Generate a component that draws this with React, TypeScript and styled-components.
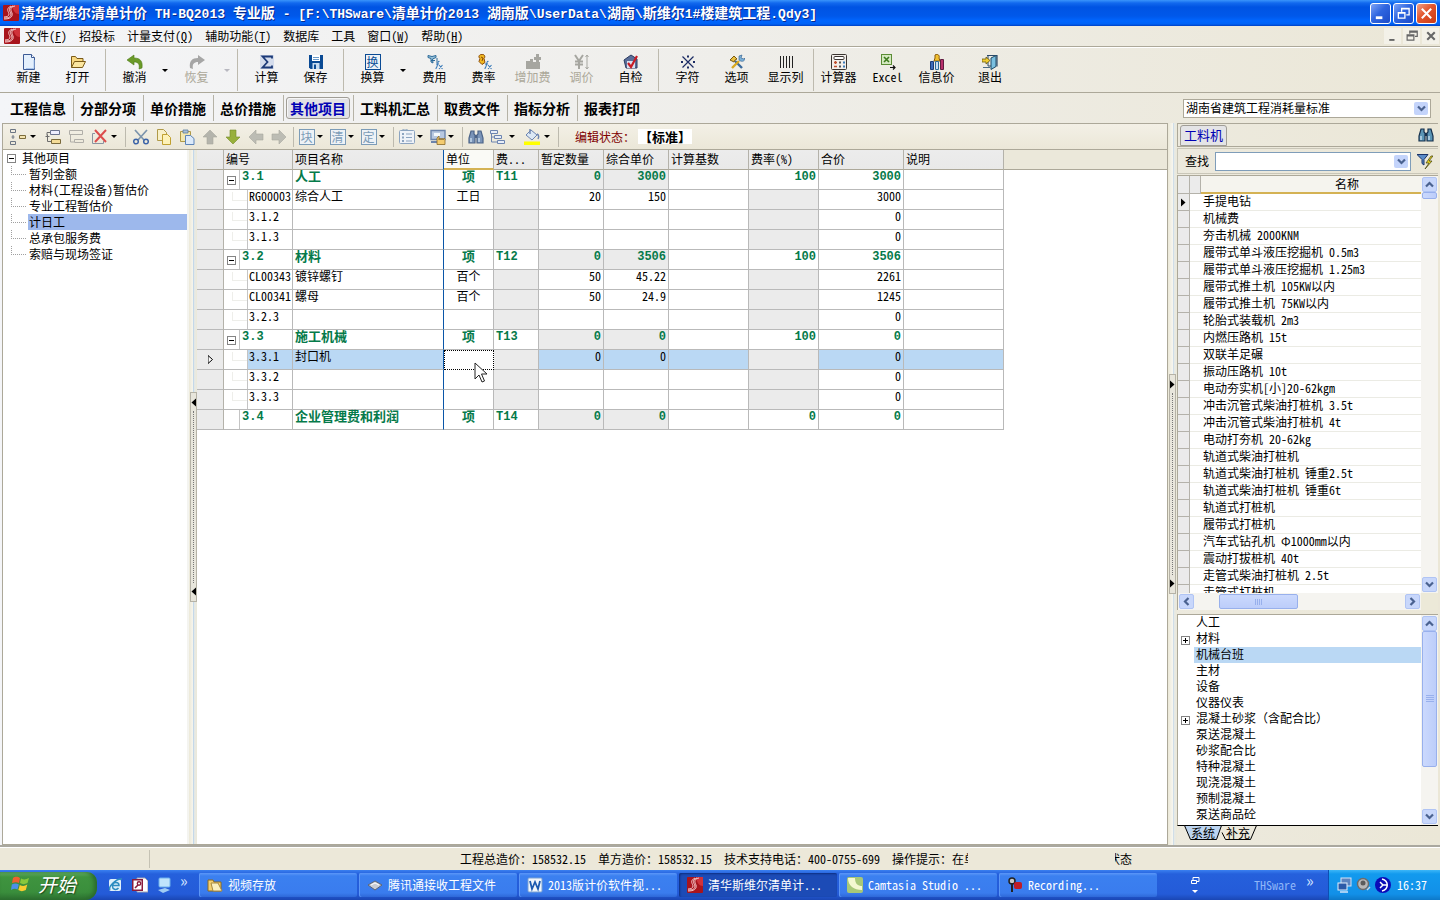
import React from 'react';
import styled, { createGlobalStyle, css } from 'styled-components';

const CJK = '"Noto Sans Mono CJK SC", "Noto Sans CJK SC", sans-serif';
const MONO = '"Liberation Mono", "Noto Sans CJK SC", monospace';

const GlobalStyle = createGlobalStyle`
  * { box-sizing: border-box; }
  body { margin: 0; font: 12px/16px ${CJK}; color: #000; background: #ece9d8; }
  button, input, select { font: inherit; color: inherit; margin: 0; padding: 0; border: 0; background: none; border-radius: 0; }
  button { white-space: nowrap; }
  ul { list-style: none; margin: 0; padding: 0; }
  svg { display: block; flex: none; }
`;

/* ---------- shell ---------- */
const Shell = styled.div`
  display: flex;
  flex-direction: column;
  height: 100vh;
  overflow: hidden;
  background: linear-gradient(90deg, #f4f5f8 0%, #efeeea 50%, #ebe7d7 100%);
`;

const TitleBar = styled.header`
  display: flex;
  align-items: center;
  gap: 2px;
  height: 26px;
  padding: 0 3px;
  flex: none;
  background: linear-gradient(180deg, #3a95fb 0, #1269ee 3px, #0054e3 7px, #0058ea 16px, #0066ff 21px, #0062f5 24px, #0040c4 26px);
`;

const Title = styled.h1`
  flex: 1;
  margin: 0;
  overflow: hidden;
  white-space: pre;
  font: bold 14px/24px ${CJK};
  color: #fff;
  text-shadow: 1px 1px 0 #0a2a8c;
`;

const TitleLatin = styled.span`
  font: bold 13px/24px ${MONO};
`;

const WindowButton = styled.button<{ $close?: boolean }>`
  display: grid;
  place-items: center;
  width: 21px;
  height: 21px;
  border: 1px solid #fff;
  border-radius: 3px;
  background: ${p => (p.$close ? 'linear-gradient(135deg,#f0a088,#e2552c 45%,#c93a14)' : 'linear-gradient(135deg,#7ea4f6,#2f66e0 45%,#1c4bc8)')};
`;

const MenuBar = styled.nav`
  display: flex;
  align-items: center;
  gap: 12px;
  height: 21px;
  padding: 0 1px 0 4px;
  flex: none;
  border-bottom: 1px solid #aca899;
`;

const MenuItem = styled.button`
  line-height: 18px;
  &:first-of-type { margin-left: -7px; }
`;

const MdiButtons = styled.div`
  display: flex;
  gap: 2px;
  margin-left: auto;
`;

const MdiButton = styled.button`
  display: grid;
  place-items: center;
  width: 17px;
  height: 16px;
  background: #f3f1e8;
`;

/* ---------- main toolbar ---------- */
const Toolbar = styled.div`
  display: flex;
  align-items: center;
  height: 46px;
  padding-left: 4px;
  flex: none;
  border-top: 1px solid #fff;
  border-bottom: 1px solid #aca899;
`;

const ToolButton = styled.button<{ $w?: number }>`
  display: flex;
  flex-direction: column;
  align-items: center;
  align-self: flex-start;
  width: ${p => p.$w ?? 49}px;
  line-height: 14px;
  margin-top: 6px;
  &:disabled { color: #aca899; }
`;

const DropArrow = styled.button<{ $dim?: boolean; $w?: number }>`
  width: ${p => p.$w ?? 12}px;
  height: 20px;
  display: flex;
  align-items: center;
  &::after {
    content: '';
    border: 3px solid transparent;
    border-top-color: ${p => (p.$dim ? '#b8b8c0' : '#000')};
    border-bottom: 0;
    margin-left: ${p => (p.$w ? 3 : 1)}px;
  }
`;

const Divider = styled.i<{ $w?: number; $h?: number }>`
  width: ${p => p.$w ?? 8}px;
  height: ${p => p.$h ?? 42}px;
  flex: none;
  &::before {
    content: '';
    display: block;
    height: 100%;
    margin-left: 3px;
    border-left: 1px solid #bdbaae;
  }
`;

/* ---------- page tabs ---------- */
const TabRow = styled.div`
  display: flex;
  align-items: center;
  height: 30px;
  padding: 0 9px 0 4px;
  flex: none;
`;

const PageTab = styled.button<{ $active?: boolean }>`
  display: flex;
  align-items: center;
  height: 26px;
  padding: 0 3px 0 2px;
  border-right: 1px solid #b5b2a6;
  font: bold 14px/18px ${CJK};
  &:last-of-type { border-right: 0; }
  span {
    padding: 1px 3px 1px;
    border: 1px solid transparent;
    border-radius: 3px;
    ${p => p.$active && css`
      color: #0000b4;
      border-color: #a09d96;
      background: #e2e2e4;
      box-shadow: inset 1px 1px 0 #f6f6f6;
    `}
  }
`;

const Combo = styled.div<{ $w?: number; $blue?: boolean }>`
  display: flex;
  align-items: center;
  height: 19px;
  padding: 0 2px;
  background: #fff;
  border: 1px solid ${p => (p.$blue ? '#7f9db9' : '#aca899')};
  ${p => (p.$w ? `width: ${p.$w}px; margin-left: auto; flex: none;` : 'flex: 1; min-width: 0;')}
  select, input { flex: 1; min-width: 0; width: 100%; height: 16px; appearance: none; outline: 0; }
`;

const ComboArrow = styled.span`
  display: grid;
  place-items: center;
  width: 14px;
  height: 13px;
  border-radius: 2px;
  background: #c4d4fb;
`;

/* ---------- workspace ---------- */
const Workspace = styled.main`
  display: flex;
  flex: 1;
  min-height: 0;
  border-bottom: 2px solid #aaa89f;
`;

const Editor = styled.section`
  display: flex;
  flex-direction: column;
  flex: 1;
  min-width: 0;
  margin-left: 2px;
  border: 1px solid #aca899;
`;

const EditBar = styled.div`
  display: flex;
  align-items: center;
  height: 26px;
  padding-left: 3px;
  flex: none;
  background: linear-gradient(180deg, #f3f0e6, #ebe7d8);
  border-bottom: 1px solid #aca899;
`;

const EditButton = styled.button<{ $narrow?: boolean }>`
  display: grid;
  place-items: center;
  width: ${p => (p.$narrow ? 19 : 23)}px;
  height: 22px;
`;

const BoxedChar = styled.span<{ $strong?: boolean }>`
  display: grid;
  place-items: center;
  width: 16px;
  height: 16px;
  font-size: 12px;
  line-height: 12px;
  color: ${p => (p.$strong ? '#0a5098' : '#7c9cb8')};
  border: 1px solid ${p => (p.$strong ? '#0a4a94' : '#7c9cb8')};
  background: #eef2f6;
`;

const StateLabel = styled.span`
  margin-left: 13px;
  color: #800000;
`;

const StateValue = styled.strong`
  padding: 0 1px;
  margin-left: 3px;
  font: bold 13px/15px ${CJK};
  background: #fff;
`;

const EditorBody = styled.div`
  display: flex;
  flex: 1;
  min-height: 0;
`;

const ProjectTree = styled.ul`
  width: 186px;
  flex: none;
  background: #fff;
  border-right: 2px solid #f4f4f0;
`;

const ProjectNode = styled.li<{ $selected?: boolean; $root?: boolean }>`
  display: flex;
  align-items: center;
  height: 16px;
  padding-left: ${p => (p.$root ? 4 : 8)}px;
  &::before {
    ${p => !p.$root && css`
      content: '';
      align-self: flex-start;
      width: 15px;
      height: 9px;
      margin-right: 2px;
      border-left: 1px dotted #a0a0a0;
      border-bottom: 1px dotted #a0a0a0;
      box-sizing: border-box;
    `}
  }
  button {
    flex: 1;
    height: 16px;
    padding-bottom: 1px;
    line-height: 15px;
    text-align: left;
    padding-left: ${p => (p.$root ? 6 : 1)}px;
    background: ${p => (p.$selected ? '#9db8ec' : 'transparent')};
  }
`;

const Toggle = styled.span`
  display: inline-grid;
  place-items: center;
  width: 9px;
  height: 9px;
  flex: none;
  border: 1px solid #848484;
  background: #fff;
`;

const Splitter = styled.div<{ $w: number }>`
  display: flex;
  align-items: center;
  justify-content: center;
  width: ${p => p.$w}px;
  flex: none;
  background: linear-gradient(90deg, #ece9d8 0, #f6f5ee 50%, #b4d0ea 50%, #e6e9e6 70%, #ece9d8 100%);
`;

const SplitGrip = styled.div<{ $h: number }>`
  display: flex;
  flex-direction: column;
  align-items: center;
  justify-content: space-between;
  width: 7px;
  height: ${p => p.$h}px;
  padding: 5px 0;
  background: #e8e6dc;
  border: 1px solid #b5b2a6;
  i { flex: 1; margin: 4px 0; border-left: 1px dotted #777; }
`;

const GridArea = styled.div`
  flex: 1;
  min-width: 0;
  background: linear-gradient(180deg, #ebe8da 0, #ebe8da 19px, #aca899 19px, #aca899 20px, #fff 20px);
`;

const Grid = styled.table`
  table-layout: fixed;
  width: 807px;
  border-collapse: separate;
  border-spacing: 0;
  th {
    height: 20px;
    padding: 0 2px 2px;
    font-weight: normal;
    text-align: left;
    line-height: 16px;
    white-space: nowrap;
    background: linear-gradient(180deg, #ececec, #e9e9e8);
    border-right: 1px solid #b4b2aa;
    border-bottom: 1px solid #aca899;
  }
`;

const FocusedHead = styled.th`
  && { background: #fafaf6; border-bottom: 2px solid #d4b254; padding-bottom: 1px; }
`;

const Row = styled.tr<{ $group?: boolean }>`
  height: 20px;
  ${p => p.$group && css`
    color: #057a4a;
    font: bold 13px/14px ${CJK};
  `}
`;

type CellProps = { $align?: 'right' | 'center'; $shade?: boolean; $picked?: boolean; $frozen?: boolean; $num?: boolean };

const Cell = styled.td<CellProps>`
  height: 20px;
  padding: 0 2px;
  line-height: 12px;
  vertical-align: top;
  white-space: nowrap;
  text-align: ${p => p.$align ?? 'left'};
  background: ${p => (p.$shade ? '#ebebeb' : p.$picked ? '#bad8f4' : '#fff')};
  border-right: 1px solid ${p => (p.$frozen ? '#0a56a8' : '#b9b9b9')};
  border-bottom: 1px solid #b9b9b9;
  ${p => p.$num && css`font-family: ${MONO}; font-size: 12px; line-height: 15px;`}
`;

const HeadFrozen = styled.th`
  && { border-right-color: #0a56a8; }
`;

const RowMark = styled.td`
  background: #ebebeb;
  border-right: 1px solid #b4b2aa;
  border-bottom: 1px solid #b9b9b9;
  padding: 0 0 0 11px;
`;

const CodeCell = styled.td`
  height: 20px;
  padding: 0;
  background: #fff;
  border-right: 1px solid #b9b9b9;
  border-bottom: 1px solid #b9b9b9;
`;

const Code = styled.div<{ $child?: boolean; $picked?: boolean; $group?: boolean }>`
  display: flex;
  height: 19px;
  line-height: 12px;
  white-space: nowrap;
  > i {
    display: flex;
    align-items: center;
    width: ${p => (p.$child ? 24 : 16)}px;
    flex: none;
    padding: 2px 0 0 3px;
    border-right: 1px solid #c4c4c4;
  }
  > i::after {
    content: '';
    display: ${p => (p.$child ? 'block' : 'none')};
    align-self: flex-start;
    margin-left: 5px;
    width: 15px;
    height: 8px;
    border-left: 1px solid #eeeeea;
    border-bottom: 1px solid #eeeeea;
  }
  > span {
    flex: 1;
    padding-left: ${p => (p.$child ? 1 : 2)}px;
    background: ${p => (p.$picked ? '#bad8f4' : 'transparent')};
    ${p => p.$group && css`font-family: ${MONO}; font-size: 12px; line-height: 15px;`}
  }
`;

const FocusCell = styled.td`
  position: relative;
  padding: 0;
  background: #fff;
  border: 1px dotted #000;
`;

const Pointer = styled.svg`
  position: absolute;
  left: 29px;
  top: 11px;
  z-index: 2;
`;

/* ---------- right side ---------- */
const Side = styled.aside`
  display: flex;
  flex-direction: column;
  width: 261px;
  flex: none;
  margin-right: 2px;
`;

const SideHead = styled.div`
  display: flex;
  align-items: center;
  justify-content: space-between;
  height: 24px;
  padding: 0 4px 0 2px;
  flex: none;
  border: 1px solid #aca899;
  border-right: 0;
`;

const SideTab = styled.button`
  height: 21px;
  padding: 0 3px;
  font-size: 13px;
  color: #0000b4;
  background: #e4e4e6;
  border: 1px solid #a09d96;
  border-radius: 3px 3px 0 0;
`;

const SearchRow = styled.div`
  display: flex;
  align-items: center;
  gap: 6px;
  height: 26px;
  padding: 0 5px 0 7px;
  margin: 1px 0;
  flex: none;
  border: 1px solid #c9c6b8;
  border-right: 0;
`;

const ListFrame = styled.div`
  display: grid;
  grid-template: minmax(0, 1fr) 17px / minmax(0, 1fr) 17px;
  flex: 1;
  min-height: 0;
  border-left: 1px solid #aca899;
  border-top: 1px solid #aca899;
`;

const ListClip = styled.div`
  overflow: hidden;
  background: #fff;
`;

const ResourceTable = styled.table`
  table-layout: fixed;
  width: 100%;
  border-collapse: separate;
  border-spacing: 0;
  th {
    height: 18px;
    padding: 0 0 1px 72px;
    font-weight: normal;
    line-height: 14px;
    background: #f5f4ee;
    border-bottom: 2px solid #d4b254;
    &:first-child, &:nth-child(2) { background: #ebebeb; border-right: 1px solid #b4b2aa; border-bottom: 1px solid #b4b2aa; padding: 0; }
  }
  td {
    height: 17px;
    padding: 0 0 2px;
    line-height: 14px;
    white-space: nowrap;
    border-bottom: 1px solid #ebebe4;
    &:first-child { background: #ebebeb; border-right: 1px solid #b4b2aa; border-bottom-color: #b4b2aa; padding: 0 0 0 3px; }
    &:last-child { padding-left: 2px; }
  }
`;

const Bar = styled.div<{ $h?: boolean }>`
  display: flex;
  flex-direction: ${p => (p.$h ? 'row' : 'column')};
  padding: 1px;
  background: #f5f4f0;
`;

const ScrollButton = styled.button`
  display: grid;
  place-items: center;
  width: 15px;
  height: 15px;
  flex: none;
  border: 1px solid #b0c4f4;
  border-radius: 2px;
  background: #c8d7fb;
`;

const Track = styled.div<{ $h?: boolean; $start: number; $size: number }>`
  display: flex;
  flex-direction: ${p => (p.$h ? 'row' : 'column')};
  flex: 1;
  min-height: 0;
  &::before { content: ''; flex: ${p => p.$start} 0 0; }
  &::after { content: ''; flex: ${p => 100 - p.$start - p.$size} 0 0; }
  > div {
    display: grid;
    place-items: center;
    flex: ${p => p.$size} 0 0;
    min-height: 7px;
    overflow: hidden;
    border: 1px solid #98b0ec;
    border-radius: 2px;
    background: ${p => (p.$h ? 'linear-gradient(180deg,#cbd9fd,#bccdfa)' : 'linear-gradient(90deg,#cbd9fd,#bccdfa)')};
  }
`;

const Corner = styled.div`
  background: #ece9d8;
`;

const CatalogFrame = styled.div`
  display: flex;
  flex: none;
  margin-top: 4px;
  border-top: 1px solid #aca899;
  border-left: 1px solid #aca899;
  border-bottom: 1px solid #000;
`;

const Catalog = styled.ul`
  flex: 1;
  padding-bottom: 2px;
  background: #fff;
`;

const CatalogNode = styled.li<{ $selected?: boolean }>`
  display: flex;
  align-items: center;
  height: 16px;
  > i { width: 16px; flex: none; padding-left: 3px; display: flex; padding-top: 2px; }
  button {
    flex: 1;
    height: 16px;
    text-align: left;
    padding: 0 0 2px 2px;
    line-height: 14px;
    background: ${p => (p.$selected ? '#bad8f4' : 'transparent')};
  }
`;

const SheetTabs = styled.div`
  display: flex;
  height: 19px;
  padding-left: 7px;
  flex: none;
`;

const SheetTab = styled.button`
  position: relative;
  width: 38px;
  height: 15px;
  margin-right: -3px;
  padding-bottom: 2px;
  line-height: 12px;
  > svg { position: absolute; left: 0; top: -1px; }
  > span { position: relative; }
`;

/* ---------- bottom ---------- */
const StatusBar = styled.footer`
  display: flex;
  align-items: center;
  height: 23px;
  flex: none;
  background: #ece8d9;
  border-top: 1px solid #fff;
  > span { white-space: nowrap; margin-right: 12px; }
`;

const StatusPane = styled.div`
  width: 150px;
  height: 18px;
  margin-right: 310px;
  flex: none;
  border-right: 1px solid #c5c2b4;
`;

const ClipHint = styled.div`
  width: 76px;
  overflow: hidden;
  white-space: nowrap;
`;

const ClipState = styled.div`
  display: flex;
  justify-content: flex-end;
  width: 17px;
  margin-left: 147px;
  overflow: hidden;
  white-space: nowrap;
`;

const TaskBar = styled.footer`
  display: flex;
  align-items: center;
  height: 30px;
  flex: none;
  color: #fff;
  background: linear-gradient(180deg, #3a80f0 0, #2560dc 4px, #245bd8 24px, #1a46b4 30px);
`;

const StartButton = styled.button`
  display: flex;
  align-items: center;
  gap: 8px;
  width: 97px;
  height: 28px;
  padding: 0 0 4px 11px;
  margin-top: 2px;
  font: italic 19px/20px ${CJK};
  color: #fff;
  text-shadow: 1px 1px 1px #1c4a1c;
  border-radius: 0 10px 12px 0;
  background: linear-gradient(180deg, #6cb56c 0, #3f943f 5px, #3a8e3c 20px, #2c7030 28px);
  box-shadow: inset -3px 0 4px #2a6a2c;
`;

const QuickLaunch = styled.div`
  display: flex;
  align-items: center;
  gap: 8px;
  width: 102px;
  padding-left: 11px;
`;

const Tasks = styled.div`
  display: flex;
  flex: 1;
  min-width: 0;
  gap: 2px;
`;

const Task = styled.button<{ $active?: boolean }>`
  display: flex;
  align-items: center;
  gap: 5px;
  flex: 0 1 158px;
  min-width: 0;
  height: 24px;
  padding: 0 8px;
  overflow: hidden;
  color: #fff;
  border-radius: 2px;
  background: ${p => (p.$active ? '#1c4bb6' : 'linear-gradient(180deg,#5b97f8 0,#3b80f0 3px,#3a7cee 20px,#2e68d8 24px)')};
  box-shadow: ${p => (p.$active ? 'inset 1px 1px 2px #0d2f80' : 'inset 1px 0 0 #5d97f6')};
`;

const TaskTools = styled.div`
  display: flex;
  align-items: center;
  gap: 10px;
  width: 138px;
  flex: none;
  color: #8fb6f8;
  > svg { margin-right: 44px; }
`;

const Chevrons = styled.span`
  margin-top: -10px;
  font-size: 16px;
  color: #cfe0ff;
`;

const Tray = styled.div`
  display: flex;
  align-items: center;
  gap: 3px;
  width: 112px;
  height: 30px;
  padding-left: 8px;
  flex: none;
  background: linear-gradient(180deg, #3cb6f8 0, #129aee 4px, #1290e8 24px, #0d78c8 30px);
  border-left: 1px solid #0d4fb4;
  > time { margin-left: 3px; }
`;

/* ---------- icons ---------- */
type IconProps = { children: React.ReactNode; size?: number };
const Icon = ({ children, size = 16 }: IconProps) => (
  <svg width={size} height={size} viewBox="0 0 16 16" fill="none" aria-hidden="true">{children}</svg>
);

const LogoIcon = () => (
  <Icon>
    <rect width="16" height="16" rx="1" fill="#a8141c" />
    <path d="M9 0h7v9C12 9 10 6 9 0z" fill="#d0323a" />
    <path d="M12 1C6 2 8 6 9 8c1 4-2 6-8 6M10 1C4 3 7 6 8 9c0 3-2 4-7 4M8 1C2 4 6 7 6 9c0 2-2 3-5 3" stroke="#f5c8c8" strokeWidth="1" />
  </Icon>
);

const FxMark = () => <path d="M12.500 7.500c-1.500-.5-1.500 1-2 3s-.8 4-2 4M9 10h3M12 11l3.500 4M15.500 11L12 15" stroke="#3a7ab8" strokeWidth="1.100" />;

const bigIcons: Record<string, React.ReactNode> = {
  new: <Icon><path d="M2.500.5h8l3 3v12h-11z" fill="#e4effc" stroke="#3c5a96" /><path d="M10.500.5v3h3" fill="#fff" stroke="#3c5a96" /><path d="M5 14.500h8V6" stroke="#a8c4ec" /></Icon>,
  open: <Icon><path d="M1.500 13.500v-11h4l1.500 2h6v3" fill="#f8d880" stroke="#7a5a18" /><path d="M1.500 13.500l3-6h11l-3 6z" fill="#fbe6a0" stroke="#7a5a18" /></Icon>,
  undo: <Icon><path d="M0 6l7-5v3c6 0 9 3 8 10l-3 1c1-5-1-7-5-7v3z" fill="#6a9a28" stroke="#4d7a18" strokeWidth=".6" /></Icon>,
  redo: <Icon><path d="M16 6L9 1v3C3 4 0 7 1 14l3 1c-1-5 1-7 5-7v3z" fill="#a6a6a6" /></Icon>,
  sum: <Icon><rect x="1" y="1" width="14" height="14" fill="#d4dcec" /><path d="M13 4.500V2.500H3.500L8.500 8l-5 5.500H13v-2" stroke="#1c3a78" strokeWidth="1.800" /></Icon>,
  save: <Icon><path d="M1 1h14v14H2.500L1 13.500z" fill="#0a4a94" /><path d="M4 1h8v6H4z" fill="#fff" /><path d="M5 3.500h6M5 5.500h6" stroke="#6a9ac8" /><path d="M4.500 9h7v6h-7z" fill="#c8dcf0" /><path d="M6 10.500h2V15H6z" fill="#0a4a94" /></Icon>,
  convert: <BoxedChar $strong>换</BoxedChar>,
  fee: <Icon><path d="M1 1.500l4 1 4-1v2L5.500 5 6 9l-2-1V4.500L1 3.500zM8 6.500H4M10 4v5" fill="#9ac4dc" stroke="#2c6a98" /><FxMark /></Icon>,
  rate: <Icon><path d="M5 .500c3-1 5 2 3 4l1 4-3 2-3-3 1-3C2 3 3 1 5 .5z" fill="#f0b820" stroke="#8a4a08" /><path d="M5 3l2 1-1 3" stroke="#8a4a08" /><FxMark /></Icon>,
  extra: <Icon><path d="M1 7h4V5h3v3h7v7H1zM9 3h2V0h3v3h2v3h-2v2h-3V6H9z" fill="#a6a6a0" /></Icon>,
  adjust: <Icon><path d="M1 1l4 6 4-6M1 7.500h8M1 10.500h8M5 7v8" stroke="#a6a6a0" strokeWidth="2" /><path d="M13 1v14M11.500 3L13 1l1.500 2M11.500 13l1.500 2 1.500-2" stroke="#a6a6a0" /></Icon>,
  check: <Icon><path d="M1 6l7-5 6 4v9H3z" fill="#5a6e98" stroke="#2a3a60" /><path d="M4 7h8v7H4z" fill="#d8e0f0" /><path d="M5 9l3 4 6-11" stroke="#c81c24" strokeWidth="2.200" /></Icon>,
  symbol: <Icon><path d="M2.500 2.500l11 11M13.500 2.500l-11 11" stroke="#1c2c64" strokeWidth="1.200" /><path d="M7 1.500h2v2H7zM7 12.500h2v2H7zM1 7h2v2H1zM13 7h2v2h-2z" fill="#1c2c64" /></Icon>,
  options: <Icon><path d="M6 7l7 7" stroke="#3a6a9c" strokeWidth="2.400" /><path d="M10 7L3 14" stroke="#d8a820" strokeWidth="2.400" /><path d="M1 6l4-4 3 3-2 1-1 2z" fill="#e8c040" stroke="#7a5a10" /><path d="M10 2l3-1-1 3 3 1 1-1c0 4-4 4-6 2z" fill="#7ab0d8" stroke="#2c5a8c" strokeWidth=".6" /></Icon>,
  columns: <Icon><path d="M2.500 2v12M5.500 2v12M8.500 2v12M11.500 2v12M14.500 2v12" stroke="#222" /></Icon>,
  calc: <Icon><rect x=".5" y=".5" width="15" height="15" rx="1" fill="#f2eeea" stroke="#3a3430" /><rect x="3" y="2.500" width="10" height="3" rx="1" fill="#fff" stroke="#3a3430" /><path d="M3 8.500h3M3 12.500h3M4.500 7v3" stroke="#c05030" strokeWidth="1.300" /><path d="M8 8.500h2M8 12.500h2" stroke="#555" strokeWidth="2" /><path d="M12 8.500h2M12 12.500h2" stroke="#3a7ab8" strokeWidth="2" /></Icon>,
  excel: <Icon><rect x="1.500" y=".5" width="10" height="10" fill="#d4e8c0" stroke="#5a8c34" /><path d="M4 3l5 5M9 3L4 8" stroke="#3c7a1c" strokeWidth="1.600" /><path d="M10 13.500h5M13 11.500l2 2-2 2" stroke="#111" strokeWidth="1.200" /></Icon>,
  info: <Icon><path d="M6 1c3-2 5 1 4 3l1 3H5l1-3z" fill="#f0c030" stroke="#8a5a08" /><path d="M1.500 7.500h3v8h-3z" fill="#3c6ab8" stroke="#1c3a78" /><path d="M6.500 7.500h3v8h-3z" fill="#c8dcf4" stroke="#2c6a98" /><path d="M11.500 5.500h3v10h-3z" fill="#b8306c" stroke="#601c40" /></Icon>,
  exit: <Icon><path d="M5 1.500h10v11" stroke="#2c4a68" strokeWidth="1.200" /><path d="M6 2v10h3" stroke="#2c4a68" /><path d="M9 4l5-2.500v11L9 15.500z" fill="#7ac0e0" stroke="#1c4a68" /><path d="M0 5h4V3l4 3.500L4 10V8H0z" fill="#f0cc30" stroke="#6a5a10" strokeWidth=".8" /><path d="M1 13.500h7" stroke="#4a6a84" /></Icon>,
};

const Binoculars = ({ dark }: { dark?: boolean }) => {
  const line = dark ? '#16304c' : '#4c6488';
  const fill = dark ? '#5a94b4' : '#7a94b8';
  return (
    <Icon>
      <path d="M3 2h3v3l1 1v8H1V9zM13 2h-3v3L9 6v8h6V9z" fill={fill} stroke={line} strokeWidth="1.200" />
      <path d="M7 6h2v3H7z" fill={line} />
      <path d="M3 9v4M11 9v4" stroke="#d8ecf8" strokeWidth="1.200" />
    </Icon>
  );
};

const Arrow = ({ turn, color, edge }: { turn: number; color: string; edge: string }) => (
  <Icon><path d="M8 1l7 7h-4v7H5V8H1z" fill={color} stroke={edge} strokeWidth=".6" transform={`rotate(${turn} 8 8)`} /></Icon>
);

const edit = {
  addSibling: <Icon><path d="M.5.5h5v3h-5zM.5 12.500h5v3h-5z" stroke="#6c7684" /><path d="M3 6v4M1.500 8h3" stroke="#6c7684" /><path d="M9.500 6.500h6v3h-6z" fill="#f4e4b0" stroke="#7c6c3c" /></Icon>,
  addChild: <Icon><path d="M5.500 1.500h9v4h-9z" fill="#eef" stroke="#6c7490" /><path d="M6.500 10.500h9v4h-9z" fill="#f4dc98" stroke="#7a6a3c" /><path d="M5 3.500H2v3M2.500 9v3.500H6M.5 7.500h4M2.500 5.500v4" stroke="#6c6c6c" /></Icon>,
  insert: <Icon><path d="M1.500 1.500h13v4h-13z" stroke="#b0aea8" /><path d="M6.500 10.500h9v3h-9zM2.500 6v7H6" stroke="#b0aea8" /></Icon>,
  remove: <Icon><path d="M4 4.500H1.500v10h11V12" stroke="#8a94a0" /><path d="M4 1l11 12M15 1L4 13" stroke="#dc4c4c" strokeWidth="2" /></Icon>,
  cut: <Icon><path d="M2 1l9 10M14 1L5 11" stroke="#7c94ac" strokeWidth="1.700" /><circle cx="3" cy="12.500" r="2.300" stroke="#3c64a8" strokeWidth="1.500" /><circle cx="13" cy="12.500" r="2.300" stroke="#3c64a8" strokeWidth="1.500" /></Icon>,
  copy: <Icon><path d="M1.500.5h6l3 3v8h-9z" fill="#f8f0c8" stroke="#b09a48" /><path d="M6.500 5.500h5l3 3v7h-8z" fill="#fdf2b8" stroke="#c0a030" /></Icon>,
  paste: <Icon><path d="M1.500 2.500h10v10h-10z" fill="#f2e8b0" stroke="#b09a48" /><path d="M4 1h5v3H4z" fill="#a8c0d8" stroke="#5c7ca0" strokeWidth=".8" /><path d="M6.500 6.500h5l3.500 3v6H6.500z" fill="#dceafa" stroke="#5c84b8" /></Icon>,
  props: <Icon><rect x=".5" y="1.500" width="15" height="13" rx="1" fill="#eef2f8" stroke="#8ca4c0" /><path d="M3 4h2v2H3zM3 7.500h2v2H3zM3 11h2v2H3z" fill="#8ca4c0" /><path d="M7 5h6M7 8.500h6M7 12h6M4 1V0h4v2" stroke="#8ca4c0" /></Icon>,
  screen: <Icon><path d="M1 1.500h14v9H1z" fill="#b8c8e0" stroke="#6c84ac" strokeWidth="1.400" /><path d="M4 4h6v3H4z" fill="#f4f8fc" /><path d="M1 13h6" stroke="#6c84ac" strokeWidth="2" /><path d="M7 15.500V9l2-2v4l1-2 1 2 1-2 1 2 1-2 1 1v5.500z" fill="#f4cc70" stroke="#8a6a28" strokeWidth=".8" /></Icon>,
  levels: <Icon><path d="M1.500 1.500h7v3h-7zM5.500 6.500h7v3h-7zM8.500 11.500h7v3h-7z" fill="#e8eef8" stroke="#6c84b0" /><path d="M2.500 5v8H8M2.500 8H5" stroke="#6c84b0" /></Icon>,
  fill: <Icon><path d="M2 6l5-5 6 5-5 5z" fill="#dce8f4" stroke="#6c84b0" /><path d="M6 5V0M13 5c2 1 2 3 1 5" stroke="#6c84b0" strokeWidth="1.400" /><path d="M0 12.500h16V16H0z" fill="#ff0" /></Icon>,
};

const Chevron = ({ dir }: { dir: 'up' | 'down' | 'left' | 'right' }) => {
  const turn = { down: 0, left: 90, up: 180, right: 270 }[dir];
  return (
    <svg width="9" height="9" viewBox="0 0 9 9" fill="none" aria-hidden="true">
      <path d="M1 2.500L4.500 6 8 2.500" stroke="#4a6290" strokeWidth="2.200" transform={`rotate(${turn} 4.500 4.500)`} />
    </svg>
  );
};

const MinusPlus = ({ plus }: { plus?: boolean }) => (
  <Toggle>
    <svg width="5" height="5" viewBox="0 0 5 5" aria-hidden="true">
      <path d={plus ? 'M0 2h5v1H0zM2 0h1v5H2z' : 'M0 2h5v1H0z'} fill="#000" />
    </svg>
  </Toggle>
);

const SmallTriangle = ({ left, hollow }: { left?: boolean; hollow?: boolean }) => (
  <svg width="5" height="9" viewBox="0 0 5 9" aria-hidden="true">
    <path d={left ? 'M5 .5v8L.5 4.500z' : 'M0 .5v8l4.500-4z'} fill={hollow ? '#fff' : '#000'} stroke={hollow ? '#000' : 'none'} />
  </svg>
);

/* ---------- data ---------- */
const menus: [string, string?][] = [
  ['文件', 'F'], ['招投标'], ['计量支付', 'Q'], ['辅助功能', 'T'], ['数据库'], ['工具'], ['窗口', 'W'], ['帮助', 'H'],
];

type Tool = { label: string; icon: string; drop?: boolean; off?: boolean; w?: number } | { gap: number };
const tools: Tool[] = [
  { label: '新建', icon: 'new' }, { label: '打开', icon: 'open' }, { gap: 8 },
  { label: '撤消', icon: 'undo', drop: true }, { label: '恢复', icon: 'redo', drop: true, off: true }, { gap: 8 },
  { label: '计算', icon: 'sum' }, { label: '保存', icon: 'save' }, { gap: 8 },
  { label: '换算', icon: 'convert', drop: true }, { label: '费用', icon: 'fee' }, { label: '费率', icon: 'rate' },
  { label: '增加费', icon: 'extra', off: true }, { label: '调价', icon: 'adjust', off: true }, { label: '自检', icon: 'check' }, { gap: 8 },
  { label: '字符', icon: 'symbol' }, { label: '选项', icon: 'options' }, { label: '显示列', icon: 'columns' }, { gap: 4 },
  { label: '计算器', icon: 'calc' }, { label: 'Excel', icon: 'excel' }, { label: '信息价', icon: 'info' }, { label: '退出', icon: 'exit', w: 58 },
];

const pageTabs = ['工程信息', '分部分项', '单价措施', '总价措施', '其他项目', '工料机汇总', '取费文件', '指标分析', '报表打印'];
const projectNodes = ['暂列金额', '材料(工程设备)暂估价', '专业工程暂估价', '计日工', '总承包服务费', '索赔与现场签证'];

const columnWidths = [27, 69, 151, 50, 45, 65, 65, 80, 70, 85, 100];

type Line = { code: string; name?: string; unit?: string; fee?: string; qty?: string; price?: string; rate?: string; total: string; group?: boolean; leaf?: boolean; picked?: boolean };
const lines: Line[] = [
  { code: '3.1', name: '人工', unit: '项', fee: 'T11', qty: '0', price: '3000', rate: '100', total: '3000', group: true },
  { code: 'RG00003', name: '综合人工', unit: '工日', qty: '20', price: '150', total: '3000' },
  { code: '3.1.2', total: '0' },
  { code: '3.1.3', total: '0' },
  { code: '3.2', name: '材料', unit: '项', fee: 'T12', qty: '0', price: '3506', rate: '100', total: '3506', group: true },
  { code: 'CL00343', name: '镀锌螺钉', unit: '百个', qty: '50', price: '45.22', total: '2261' },
  { code: 'CL00341', name: '螺母', unit: '百个', qty: '50', price: '24.9', total: '1245' },
  { code: '3.2.3', total: '0' },
  { code: '3.3', name: '施工机械', unit: '项', fee: 'T13', qty: '0', price: '0', rate: '100', total: '0', group: true },
  { code: '3.3.1', name: '封口机', qty: '0', price: '0', total: '0', picked: true },
  { code: '3.3.2', total: '0' },
  { code: '3.3.3', total: '0' },
  { code: '3.4', name: '企业管理费和利润', unit: '项', fee: 'T14', qty: '0', price: '0', rate: '0', total: '0', group: true, leaf: true },
];

const resources = [
  '手提电钻', '机械费', '夯击机械 2000KNM', '履带式单斗液压挖掘机 0.5m3', '履带式单斗液压挖掘机 1.25m3', '履带式推土机 105KW以内',
  '履带式推土机 75KW以内', '轮胎式装载机 2m3', '内燃压路机 15t', '双联羊足碾', '振动压路机 10t', '电动夯实机[小]20-62kgm',
  '冲击沉管式柴油打桩机 3.5t', '冲击沉管式柴油打桩机 4t', '电动打夯机 20-62kg', '轨道式柴油打桩机', '轨道式柴油打桩机 锤重2.5t',
  '轨道式柴油打桩机 锤重6t', '轨道式打桩机', '履带式打桩机', '汽车式钻孔机 Φ1000mm以内', '震动打拔桩机 40t', '走管式柴油打桩机 2.5t', '走管式打桩机',
];

const catalog = ['人工', '材料', '机械台班', '主材', '设备', '仪器仪表', '混凝土砂浆（含配合比）', '泵送混凝土', '砂浆配合比', '特种混凝土', '现浇混凝土', '预制混凝土', '泵送商品砼'];

const tasks = [
  { label: '视频存放', icon: <Icon><path d="M1 3h5l1 2h7v9H1z" fill="#f4d070" stroke="#8a6a20" /><path d="M4 6h7l4 8H6z" fill="#fbf0c0" stroke="#a88a40" /></Icon> },
  { label: '腾讯通接收工程文件', icon: <Icon><path d="M1 8l7-4 7 4-7 5z" fill="#c8ccd4" stroke="#5c6474" /><path d="M4 8l4-2 4 2" stroke="#fff" /></Icon> },
  { label: '2013版计价软件视...', icon: <Icon><rect x="1" y="1" width="14" height="14" rx="1" fill="#f0f6fc" stroke="#7aa0d0" /><path d="M3 4l2 8 3-7 3 7 2-8" stroke="#1c5ab0" strokeWidth="1.800" /></Icon> },
  { label: '清华斯维尔清单计...', icon: <LogoIcon />, active: true },
  { label: 'Camtasia Studio ...', icon: <Icon><rect width="16" height="16" rx="2" fill="#a8c878" /><path d="M1 1l7 0c0 6 3 8 7 8v4C7 13 1 9 1 1z" fill="#f4f8d0" /></Icon> },
  { label: 'Recording...', icon: <Icon><circle cx="5" cy="4" r="3" fill="#c8c8c8" stroke="#222" strokeWidth="1.500" /><path d="M5 6v9" stroke="#222" strokeWidth="2" /><rect x="7" y="5" width="8" height="7" rx="2" fill="#c01c24" /></Icon> },
];

const titleParts = ['清华斯维尔清单计价', ' TH-BQ2013 ', '专业版', ' - [F:\\THSware\\', '清单计价', '2013 ', '湖南版', '\\UserData\\', '湖南', '\\', '斯维尔', '1#', '楼建筑工程', '.Qdy3]'];

/* ---------- pieces ---------- */
const VScroll = ({ start, size }: { start: number; size: number }) => (
  <Bar>
    <ScrollButton aria-label="向上"><Chevron dir="up" /></ScrollButton>
    <Track $start={start} $size={size}>
      <div>{size > 20 && <svg width="8" height="8"><path d="M0 .5h8M0 2.500h8M0 4.500h8M0 6.500h8" stroke="#98b0ec" /></svg>}</div>
    </Track>
    <ScrollButton aria-label="向下"><Chevron dir="down" /></ScrollButton>
  </Bar>
);

const GridRow = ({ line }: { line: Line }) => {
  const { group, picked } = line;
  return (
    <Row $group={group}>
      <RowMark>{picked && <SmallTriangle hollow />}</RowMark>
      <CodeCell>
        <Code $child={!group} $picked={picked} $group={group}>
          <i>{group && !line.leaf && <MinusPlus />}</i>
          <span>{line.code}</span>
        </Code>
      </CodeCell>
      <Cell $picked={picked} $frozen>{line.name}</Cell>
      {picked ? (
        <FocusCell>
          <Pointer width="14" height="22" viewBox="0 0 14 22" aria-hidden="true">
            <path d="M1 1v16l4-4 3 7 2.500-1-3-7H13z" fill="#fff" stroke="#222" />
          </Pointer>
        </FocusCell>
      ) : (
        <Cell $align="center">{line.unit}</Cell>
      )}
      <Cell $shade={!group} $num={group}>{line.fee}</Cell>
      <Cell $align="right" $shade={group} $picked={picked} $num={group}>{line.qty}</Cell>
      <Cell $align="right" $shade={group} $picked={picked} $num={group}>{line.price}</Cell>
      <Cell $picked={picked} />
      <Cell $align="right" $shade={!group} $num={group}>{line.rate}</Cell>
      <Cell $align="right" $picked={picked} $num={group}>{line.total}</Cell>
      <Cell $picked={picked} />
    </Row>
  );
};

export default function App() {
  return (
    <Shell>
      <GlobalStyle />
      <TitleBar>
        <LogoIcon />
        <Title>
          {titleParts.map((part, i) => (i % 2 ? <TitleLatin key={i}>{part}</TitleLatin> : part))}
        </Title>
        <WindowButton aria-label="最小化"><Icon size={15}><path d="M3 11h7v3H3z" fill="#fff" /></Icon></WindowButton>
        <WindowButton aria-label="还原"><Icon size={15}><path d="M6 6V2.500h8v7h-3M6 3h8" stroke="#fff" strokeWidth="1.400" /><path d="M2.500 7h7v6h-7zM2.500 7.500h7" stroke="#fff" strokeWidth="1.400" /></Icon></WindowButton>
        <WindowButton $close aria-label="关闭"><Icon size={15}><path d="M3 3l10 10M13 3L3 13" stroke="#fff" strokeWidth="2.200" /></Icon></WindowButton>
      </TitleBar>

      <MenuBar>
        <LogoIcon />
        {menus.map(([name, key]) => (
          <MenuItem key={name}>{name}{key && <>(<u>{key}</u>)</>}</MenuItem>
        ))}
        <MdiButtons>
          <MdiButton aria-label="最小化文档"><Icon size={12}><path d="M3 12h7v2.500H3z" fill="#666" /></Icon></MdiButton>
          <MdiButton aria-label="还原文档"><Icon size={12}><path d="M5 5V1.500h10v7h-3M5 3h10M1.500 6.500h9v7h-9zM1.500 8h9" stroke="#666" strokeWidth="1.600" /></Icon></MdiButton>
          <MdiButton aria-label="关闭文档"><Icon size={12}><path d="M3 3l10 10M13 3L3 13" stroke="#666" strokeWidth="2.800" /></Icon></MdiButton>
        </MdiButtons>
      </MenuBar>

      <Toolbar>
        {tools.map((tool, i) =>
          'gap' in tool ? <Divider key={i} $w={tool.gap} /> : (
            <React.Fragment key={i}>
              <ToolButton disabled={tool.off} $w={tool.w}>{bigIcons[tool.icon]}{tool.label}</ToolButton>
              {tool.drop && <DropArrow $w={13} $dim={tool.off} aria-label={`${tool.label}选项`} />}
            </React.Fragment>
          ),
        )}
      </Toolbar>

      <TabRow>
        {pageTabs.map(tab => (
          <PageTab key={tab} $active={tab === '其他项目'}><span>{tab}</span></PageTab>
        ))}
        <Combo $w={248}>
          <select aria-label="定额标准"><option>湖南省建筑工程消耗量标准</option></select>
          <ComboArrow><Chevron dir="down" /></ComboArrow>
        </Combo>
      </TabRow>

      <Workspace>
        <Editor>
          <EditBar>
            <EditButton aria-label="添加同级">{edit.addSibling}</EditButton><DropArrow aria-label="添加选项" />
            <EditButton aria-label="添加子项">{edit.addChild}</EditButton>
            <EditButton aria-label="插入" disabled>{edit.insert}</EditButton>
            <EditButton aria-label="删除">{edit.remove}</EditButton><DropArrow aria-label="删除选项" />
            <Divider $w={7} $h={20} />
            <EditButton aria-label="剪切">{edit.cut}</EditButton>
            <EditButton aria-label="复制">{edit.copy}</EditButton>
            <EditButton aria-label="粘贴">{edit.paste}</EditButton>
            <EditButton aria-label="上移" disabled><Arrow turn={0} color="#b4b4ac" edge="#a8a8a0" /></EditButton>
            <EditButton aria-label="下移"><Arrow turn={180} color="#98b03c" edge="#748c28" /></EditButton>
            <EditButton aria-label="升级" disabled><Arrow turn={270} color="#bcbcb4" edge="#a8a8a0" /></EditButton>
            <EditButton aria-label="降级" disabled><Arrow turn={90} color="#bcbcb4" edge="#a8a8a0" /></EditButton>
            <Divider $w={7} $h={20} />
            {['块', '清', '定'].map(char => (
              <React.Fragment key={char}>
                <EditButton $narrow><BoxedChar>{char}</BoxedChar></EditButton><DropArrow aria-label={`${char}选项`} />
              </React.Fragment>
            ))}
            <Divider $w={7} $h={20} />
            <EditButton $narrow aria-label="属性">{edit.props}</EditButton><DropArrow aria-label="属性选项" />
            <EditButton $narrow aria-label="显示">{edit.screen}</EditButton><DropArrow aria-label="显示选项" />
            <Divider $w={7} $h={20} />
            <EditButton $narrow aria-label="查找"><Binoculars /></EditButton>
            <EditButton aria-label="层级">{edit.levels}</EditButton><DropArrow aria-label="层级选项" />
            <EditButton aria-label="填充颜色">{edit.fill}</EditButton><DropArrow aria-label="颜色选项" />
            <Divider $w={7} $h={20} />
            <StateLabel>编辑状态：</StateLabel>
            <StateValue>【标准】</StateValue>
          </EditBar>

          <EditorBody>
            <ProjectTree>
              <ProjectNode $root><MinusPlus /><button>其他项目</button></ProjectNode>
              {projectNodes.map(name => (
                <ProjectNode key={name} $selected={name === '计日工'}><button>{name}</button></ProjectNode>
              ))}
            </ProjectTree>
            <Splitter $w={8}><SplitGrip $h={210}><SmallTriangle left /><i /><SmallTriangle left /></SplitGrip></Splitter>
            <GridArea>
              <Grid>
                <colgroup>{columnWidths.map((w, i) => <col key={i} width={w} />)}</colgroup>
                <thead>
                  <tr>
                    <th /><th>编号</th><HeadFrozen>项目名称</HeadFrozen><FocusedHead>单位</FocusedHead><th>费...</th><th>暂定数量</th>
                    <th>综合单价</th><th>计算基数</th><th>费率(%)</th><th>合价</th><th>说明</th>
                  </tr>
                </thead>
                <tbody>{lines.map(line => <GridRow key={line.code} line={line} />)}</tbody>
              </Grid>
            </GridArea>
          </EditorBody>
        </Editor>

        <Splitter $w={9}><SplitGrip $h={220}><SmallTriangle /><i /><SmallTriangle /></SplitGrip></Splitter>

        <Side>
          <SideHead>
            <SideTab>工料机</SideTab>
            <Binoculars dark />
          </SideHead>
          <SearchRow>
            <label htmlFor="find">查找</label>
            <Combo $blue>
              <input id="find" />
              <ComboArrow><Chevron dir="down" /></ComboArrow>
            </Combo>
            <Icon>
              <path d="M0 1.500h11L7 6.500V12L5 10.500v-4z" fill="#5c8cc8" stroke="#1c3468" />
              <path d="M14 3l-5 7h3l-4 6 7-8h-3l4-5z" fill="#e8d420" stroke="#3c3c10" strokeWidth=".7" />
            </Icon>
          </SearchRow>
          <ListFrame>
            <ListClip>
              <ResourceTable>
                <colgroup><col width={12} /><col width={11} /><col /></colgroup>
                <thead><tr><th /><th /><th>名称</th></tr></thead>
                <tbody>
                  {resources.map((name, i) => (
                    <tr key={name}><td>{i === 0 && <SmallTriangle />}</td><td /><td>{name}</td></tr>
                  ))}
                </tbody>
              </ResourceTable>
            </ListClip>
            <VScroll start={0} size={1} />
            <Bar $h>
              <ScrollButton aria-label="向左"><Chevron dir="left" /></ScrollButton>
              <Track $h $start={12} $size={37}>
                <div><svg width="8" height="6"><path d="M.5 0v6M2.500 0v6M4.500 0v6M6.500 0v6" stroke="#98b0ec" /></svg></div>
              </Track>
              <ScrollButton aria-label="向右"><Chevron dir="right" /></ScrollButton>
            </Bar>
            <Corner />
          </ListFrame>
          <CatalogFrame>
            <Catalog>
              {catalog.map(name => (
                <CatalogNode key={name} $selected={name === '机械台班'}>
                  <i>{(name === '材料' || name.startsWith('混凝土砂浆')) && <MinusPlus plus />}</i>
                  <button>{name}</button>
                </CatalogNode>
              ))}
            </Catalog>
            <VScroll start={0} size={76} />
          </CatalogFrame>
          <SheetTabs>
            <SheetTab>
              <svg width="38" height="16" aria-hidden="true"><path d="M.5.5l6 14h26l5-14z" fill="#bcd4f0" stroke="#000" /></svg>
              <span>系统</span>
            </SheetTab>
            <SheetTab>
              <svg width="38" height="16" aria-hidden="true"><path d="M3 7.500l3.500 7h25l6-14" fill="none" stroke="#000" /></svg>
              <span>补充</span>
            </SheetTab>
          </SheetTabs>
        </Side>
      </Workspace>

      <StatusBar>
        <StatusPane />
        <span>工程总造价：158532.15</span>
        <span>单方造价：158532.15</span>
        <span>技术支持电话：400-0755-699</span>
        <ClipHint>操作提示：在单</ClipHint>
        <ClipState>状态</ClipState>
      </StatusBar>

      <TaskBar>
        <StartButton>
          <svg width="19" height="18" viewBox="0 0 19 18" aria-hidden="true">
            <path d="M2 3c3-2 5-1 7 0L8 8C6 7 4 7 1 8z" fill="#f06030" />
            <path d="M10 3.500c3 1.500 5 1 8-.5l-1.500 5c-3 1.500-5 1.500-7.500 0z" fill="#88c83c" />
            <path d="M.8 9.500c3-1.500 5-1 7 0L6.500 14.500c-2-1-4-1-6.500.5z" fill="#4c90e8" />
            <path d="M8.800 10c3 1.500 5 1 7.500-.5l-1.500 5.500c-3 1.500-5 1.500-7.500 0z" fill="#f8cc30" />
          </svg>
          开始
        </StartButton>
        <QuickLaunch>
          <Icon><rect x="1" y="2" width="12" height="12" rx="2" fill="#dff0fa" /><path d="M4 8.500h7c0-4-6-4-6.500 0-.5 4 4 5 6 2.500M2 13C0 10 8 1 14 2" stroke="#2c8cc0" strokeWidth="1.500" /></Icon>
          <Icon><path d="M5 1h8l3 3v11H5z" fill="#fff" stroke="#a0a0b0" /><rect y="2" width="11" height="12" fill="#8a1c3c" /><rect x="1.500" y="3.500" width="8" height="9" fill="#fff" /><path d="M3 11l3-3" stroke="#8a1c3c" strokeWidth="1.600" /><circle cx="7" cy="6.500" r="1.700" stroke="#8a1c3c" strokeWidth="1.400" /></Icon>
          <Icon><rect x="3" y="1" width="11" height="9" rx="1" fill="#bfe4fc" stroke="#6cb0ec" /><path d="M2 13l7-2 5 2-7 3z" fill="#a0ccf4" /></Icon>
          <Chevrons>»</Chevrons>
        </QuickLaunch>
        <Tasks>
          {tasks.map(task => (
            <Task key={task.label} $active={task.active}>{task.icon}{task.label}</Task>
          ))}
        </Tasks>
        <TaskTools>
          <svg width="10" height="18" viewBox="0 0 10 18" fill="none" aria-hidden="true">
            <path d="M3 4V1.500h6v4H6.500M1.500 4.500h5v3h-5z" stroke="#fff" /><path d="M2 14h6l-3 3z" fill="#fff" />
          </svg>
          <span>THSware</span>
          <Chevrons>»</Chevrons>
        </TaskTools>
        <Tray>
          <Icon><rect x="4" y="1" width="10" height="8" fill="#5c84c0" stroke="#d4e4f8" /><rect x="1" y="6" width="9" height="7" fill="#2c5aa8" stroke="#e4f0fc" /><path d="M3 15h8" stroke="#d4e4f8" strokeWidth="1.500" /></Icon>
          <Icon><circle cx="7" cy="7" r="5.500" fill="#b8b8b8" stroke="#6c6c6c" strokeWidth="1.400" /><circle cx="7" cy="6" r="2.500" fill="#5c5c5c" /><path d="M11 13l3-3" stroke="#c8d8e8" strokeWidth="1.500" /></Icon>
          <Icon><circle cx="8" cy="8" r="8" fill="#0a0ab8" /><path d="M7 2c7 2 7 10 0 12M8 8l-3-3M8 8l-3 3M8 8h4" stroke="#fff" strokeWidth="1.500" /></Icon>
          <time>16:37</time>
        </Tray>
      </TaskBar>
    </Shell>
  );
}
